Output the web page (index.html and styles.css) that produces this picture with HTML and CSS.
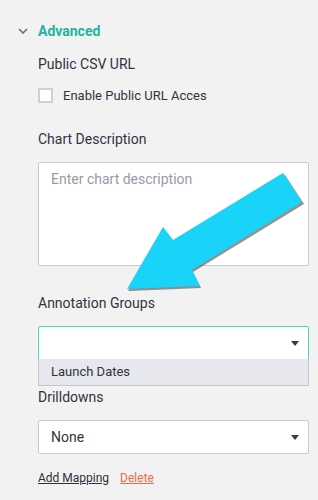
FILE: index.html
```html
<!DOCTYPE html>
<html lang="en">

<head>
  <meta charset="UTF-8" />
  <title>Advanced settings</title>
  <link rel="stylesheet" href="styles.css">
</head>

<body>
  <div class="panel">
    <!-- Section header -->
    <div class="section-head">
      <svg class="chevron" width="10" height="6" viewBox="0 0 10 6">
        <path d="M1 1 L5 5 L9 1" fill="none" stroke="#6c6c78" stroke-width="1.6" />
      </svg>
      <span class="section-title">Advanced</span>
    </div>

    <div class="section-body">
      <div class="label label-tight">Public CSV URL</div>
      <label class="check-row">
        <span class="checkbox"></span>
        <span>Enable Public URL Acces</span>
      </label>

      <div class="field">
        <div class="label">Chart Description</div>
        <div class="textarea">Enter chart description</div>
      </div>

      <div class="field">
        <div class="label">Annotation Groups</div>
        <div class="select open">
          <span></span>
          <span class="caret"></span>
          <div class="menu">
            <div class="menu-item">Launch Dates</div>
          </div>
        </div>
      </div>

      <div class="field field-last">
        <div class="label">Drilldowns</div>
        <div class="select">
          <span>None</span>
          <span class="caret"></span>
        </div>
      </div>

      <div class="links">
        <a href="#" class="link">Add Mapping</a>
        <a href="#" class="link danger">Delete</a>
      </div>
    </div>
  </div>

  <!-- callout arrow drawn over the form -->
  <svg class="callout" width="318" height="500" viewBox="0 0 318 500">
    <polygon points="128,291 164,229 174,242 285,175 304,204 193,272 201,288" fill="#3a3a3a" opacity="0.55" />
    <polygon points="127,289 163,227 173,240 283,173 302,202 192,270 200,286" fill="#19d3f8" />
  </svg>
</body>

</html>
```

FILE: styles.css
```css
* {
  box-sizing: border-box;
  margin: 0;
  padding: 0;
}
body {
  background: #f2f2f2;
  color: #33333f;
  font-family: Roboto, "Liberation Sans", sans-serif;
  font-size: 14px;
  position: relative;
}
.panel {
  padding: 21px 9px 0 18px;
}
.section-head {
  display: flex;
  align-items: center;
  height: 20px;
}
.chevron {
  margin-right: 10px;
}
.section-title {
  color: #1db5a0;
  font-weight: 700;
  font-size: 14px;
}
.section-body {
  padding: 13px 0 0 20px;
}
.label {
  line-height: 20px;
  margin-bottom: 13px;
}
.label-tight {
  margin-bottom: 11px;
}
.check-row {
  display: flex;
  align-items: center;
  height: 20px;
  gap: 10px;
  font-size: 13px;
  margin-bottom: 24px;
}
.checkbox {
  width: 15px;
  height: 15px;
  background: #fff;
  border: 2px solid #cfcfd4;
}
.field {
  margin-bottom: 27px;
}
.field-last {
  margin-bottom: 14px;
}
.textarea {
  height: 104px;
  background: #fff;
  border: 1px solid #c9c9ce;
  border-radius: 2px;
  padding: 8px 12px;
  color: #9a9aa6;
}
.select {
  position: relative;
  height: 34px;
  background: #fff;
  border: 1px solid #c9c9ce;
  border-radius: 2px;
  display: flex;
  align-items: center;
  justify-content: space-between;
  padding: 0 9px 0 12px;
}
.select.open {
  border-color: #4fd2c6;
  border-radius: 2px 2px 0 0;
}
.caret {
  width: 0;
  height: 0;
  border-left: 4px solid transparent;
  border-right: 4px solid transparent;
  border-top: 5px solid #3a3a48;
}
.menu {
  position: absolute;
  left: -1px;
  right: -1px;
  top: 32px;
  height: 27px;
  background: #e6e8ed;
  border: 1px solid #c4c4ca;
  border-top: none;
  z-index: 2;
}
.menu-item {
  line-height: 26px;
  padding-left: 12px;
  font-size: 13px;
}
.links {
  display: flex;
  gap: 11px;
  line-height: 20px;
  font-size: 12px;
}
.link {
  color: #2e2e3a;
  text-decoration: underline;
}
.link.danger {
  color: #ef6a47;
}
.callout {
  position: absolute;
  left: 0;
  top: 0;
  pointer-events: none;
  z-index: 5;
}
```
